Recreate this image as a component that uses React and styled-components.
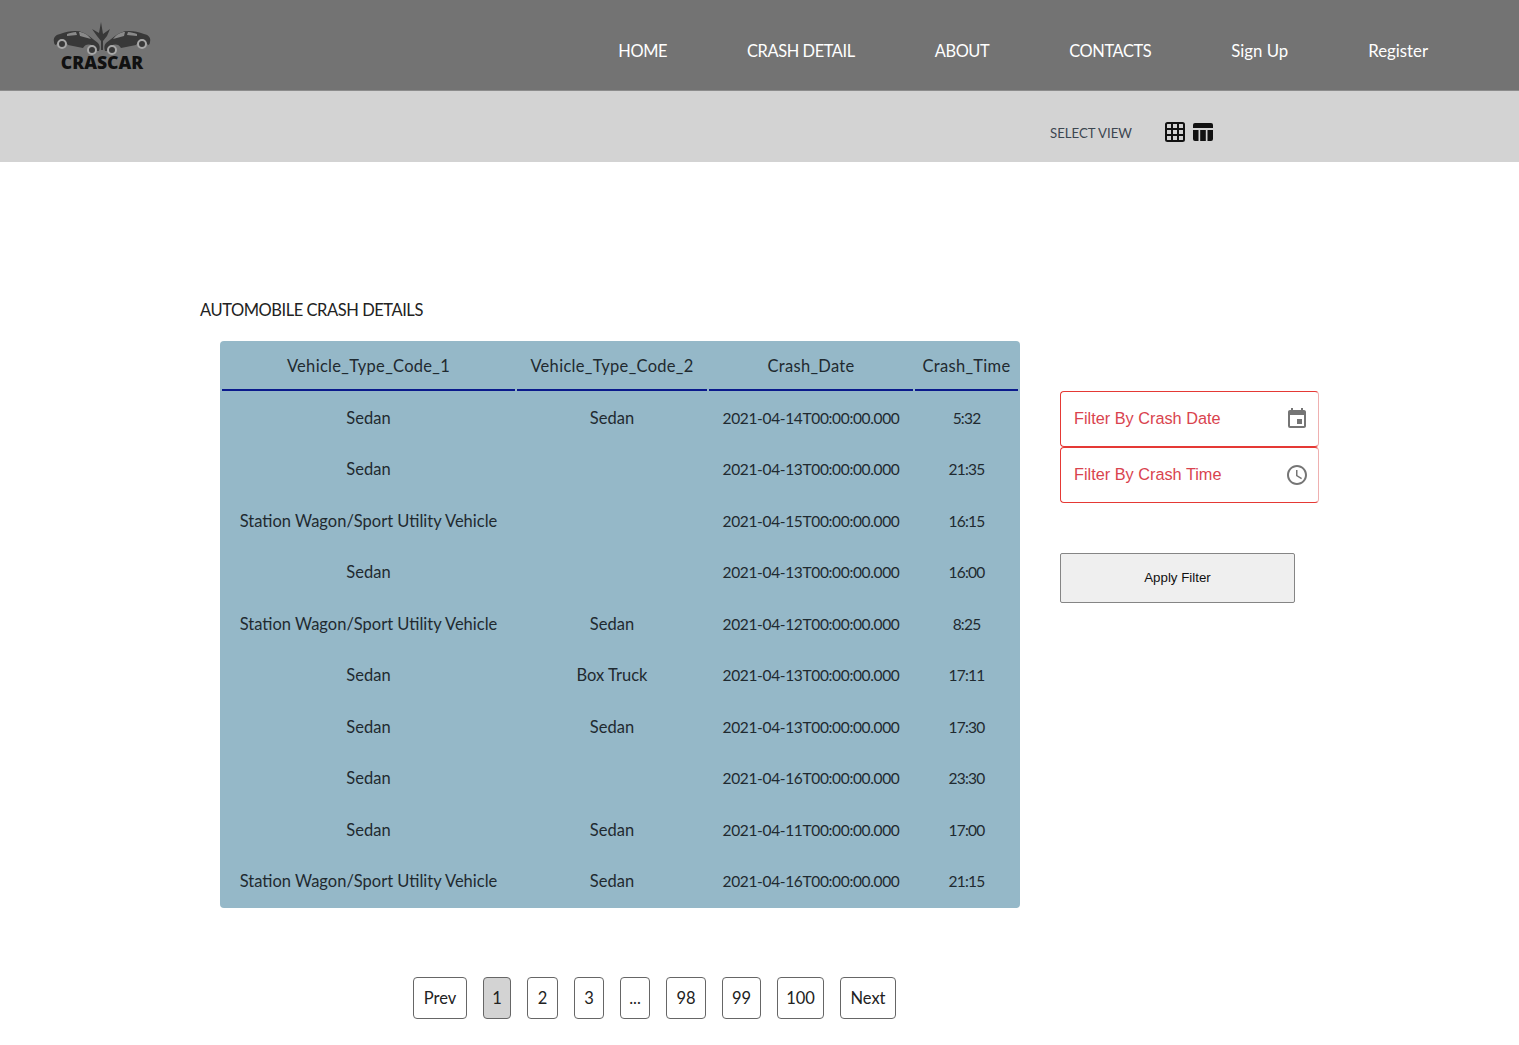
import React from 'react'
import styled, { createGlobalStyle } from 'styled-components'
import { MdEvent, MdAccessTime } from 'react-icons/md'

const GlobalStyle = createGlobalStyle`
  html, body {
    margin: 0;
    padding: 0;
    background: #fff;
    font-family: "Lato", "Open Sans", sans-serif;
    color: #1f2a30;
  }
`

const Header = styled.header`
  height: 90px;
  background: #737373;
  border-bottom: 1px solid #8c8c8c;
  display: flex;
  justify-content: space-between;
  align-items: flex-start;
  padding: 0 91px 0 52px;
`

const Logo = styled.div`
  width: 100px;
  padding-top: 21px;
  display: flex;
  flex-direction: column;
  align-items: center;
  svg {
    display: block;
  }
`

const LogoText = styled.span`
  font-family: "Open Sans", sans-serif;
  font-weight: 800;
  font-size: 17.6px;
  line-height: 17px;
  color: #111;
  margin-top: -3px;
`

const Nav = styled.nav`
  display: flex;
  gap: 80px;
  height: 100%;
  padding-top: 41px;
  box-sizing: border-box;
`

const NavLink = styled.a`
  font-size: ${props => props.caps ? '16.4px' : '16.8px'};
  letter-spacing: ${props => props.caps ? '-0.4px' : 'normal'};
  line-height: 20px;
  color: #fff;
`

const ViewBar = styled.div`
  height: 71px;
  background: #d3d3d3;
  display: flex;
  align-items: center;
  padding: 13px 0 0 1050px;
  box-sizing: border-box;
`

const ViewLabel = styled.span`
  font-size: 13.2px;
  color: #3c4650;
  margin-right: 33px;
`

const ViewIcons = styled.div`
  display: flex;
  gap: 8px;
  align-items: center;
  margin-top: -2px;
`

const Main = styled.main`
  display: flex;
  flex-direction: column;
  padding: 137px 0 0 200px;
`

const Title = styled.h2`
  margin: 0;
  font-size: 16.5px;
  letter-spacing: -0.45px;
  line-height: 22px;
  font-weight: 400;
  color: #222;
`

const Content = styled.div`
  display: flex;
  align-items: flex-start;
  margin: 20px 0 0 20px;
`

const Table = styled.table`
  width: 800px;
  table-layout: fixed;
  background: #95b8c8;
  border-radius: 4px;
  border-spacing: 2px;
  border-collapse: separate;
  font-size: 16.5px;
`

const Th = styled.th`
  height: 46px;
  padding: 0;
  font-weight: 400;
  letter-spacing: 0.3px;
  text-align: center;
  border-bottom: 2px solid #0a1a8c;
`

const Td = styled.td`
  height: 49.5px;
  padding: 0;
  text-align: center;
  font-size: ${props => props.numeric ? '15.5px' : 'inherit'};
  letter-spacing: ${props => props.numeric ? props.numeric : 'normal'};
`

const Side = styled.aside`
  width: 259px;
  margin-left: 40px;
  padding-top: 50px;
  display: flex;
  flex-direction: column;
`

const FilterField = styled.div`
  height: 56px;
  box-sizing: border-box;
  border: 1px solid #e53935;
  border-right-color: #efb0b0;
  border-radius: 4px;
  display: flex;
  align-items: center;
  justify-content: space-between;
  padding: 0 9px 2px 13px;
  font-family: "Liberation Sans", Arial, sans-serif;
  font-size: 16.3px;
  color: #d9434e;
  svg {
    color: #757575;
    margin-top: 2px;
  }
`

const ApplyButton = styled.button`
  width: 235px;
  height: 50px;
  margin-top: 50px;
  border: 1px solid #858585;
  border-radius: 2px;
  background: #efefef;
  font-family: "Liberation Sans", Arial, sans-serif;
  font-size: 13.3px;
  color: #111;
  padding: 0 0 2px 0;
`

const Pager = styled.div`
  display: flex;
  align-items: center;
  margin: 69px 0 0 213px;
  padding-bottom: 26px;
`

const PageButton = styled.button`
  height: 42px;
  width: ${props => props.w}px;
  margin-right: ${props => props.gap}px;
  box-sizing: border-box;
  padding: 0;
  border: 1px solid #666;
  border-radius: 4px;
  background: ${props => props.active ? '#d3d3d3' : '#fff'};
  font-family: "Lato", sans-serif;
  font-size: 16.5px;
  color: #222;
`

const columns = [
  { label: 'Vehicle_Type_Code_1', w: 293 },
  { label: 'Vehicle_Type_Code_2', w: 190 },
  { label: 'Crash_Date', w: 204 },
  { label: 'Crash_Time', w: 103 },
]

const SUV = 'Station Wagon/Sport Utility Vehicle'

const rows = [
  ['Sedan', 'Sedan', '2021-04-14T00:00:00.000', '5:32'],
  ['Sedan', '', '2021-04-13T00:00:00.000', '21:35'],
  [SUV, '', '2021-04-15T00:00:00.000', '16:15'],
  ['Sedan', '', '2021-04-13T00:00:00.000', '16:00'],
  [SUV, 'Sedan', '2021-04-12T00:00:00.000', '8:25'],
  ['Sedan', 'Box Truck', '2021-04-13T00:00:00.000', '17:11'],
  ['Sedan', 'Sedan', '2021-04-13T00:00:00.000', '17:30'],
  ['Sedan', '', '2021-04-16T00:00:00.000', '23:30'],
  ['Sedan', 'Sedan', '2021-04-11T00:00:00.000', '17:00'],
  [SUV, 'Sedan', '2021-04-16T00:00:00.000', '21:15'],
]

const pages = [
  { label: 'Prev', w: 54, gap: 16 },
  { label: '1', w: 28, gap: 16, active: true },
  { label: '2', w: 31, gap: 16 },
  { label: '3', w: 30, gap: 16 },
  { label: '...', w: 30, gap: 16 },
  { label: '98', w: 40, gap: 16 },
  { label: '99', w: 39, gap: 16 },
  { label: '100', w: 47, gap: 16 },
  { label: 'Next', w: 56, gap: 0 },
]

const navItems = [
  { label: 'HOME', caps: true },
  { label: 'CRASH DETAIL', caps: true },
  { label: 'ABOUT', caps: true },
  { label: 'CONTACTS', caps: true },
  { label: 'Sign Up' },
  { label: 'Register' },
]

// hand drawn from the logo: two cars nosing into a burst
function CarsLogo() {
  return (
    <svg width="98" height="36" viewBox="0 0 98 36" fill="#383838">
      <path d="M1 21c-1-4 1-7 6-8 5-2 10-3 15-3 6 0 10 2 14 5l9 7c2 2 2 5 1 8h-3a7 7 0 0 0-13-3L15 24a7 7 0 0 0-12 0c-1 0-2-1-2-3z" />
      <path d="M97 21c1-4-1-7-6-8-5-2-10-3-15-3-6 0-10 2-14 5l-9 7c-2 2-2 5-1 8h3a7 7 0 0 1 13-3l15-3a7 7 0 0 1 12 0c1 0 2-1 2-3z" />
      <path d="M14 13c3-1 6-2 9-2l1 3-10 1zM26 11c4 0 8 2 12 7l-11-3z" fill="#8a8a8a" />
      <path d="M84 13c-3-1-6-2-9-2l-1 3 10 1zM72 11c-4 0-8 2-12 7l11-3z" fill="#8a8a8a" />
      <circle cx="9" cy="23" r="4" stroke="#a8a8a8" strokeWidth="2" />
      <circle cx="39" cy="29" r="4" stroke="#a8a8a8" strokeWidth="2" />
      <circle cx="59" cy="29" r="4" stroke="#a8a8a8" strokeWidth="2" />
      <circle cx="89" cy="23" r="4" stroke="#a8a8a8" strokeWidth="2" />
      <path d="M48 1l2 12 7-5-3 7-4 5v9h-2v-9l-4-5-5-7 7 4z" />
    </svg>
  )
}

function GridIcon() {
  return (
    <svg width="20" height="20" viewBox="0 0 20 20" fill="none" stroke="#111" strokeWidth="2">
      <rect x="1" y="1" width="18" height="18" rx="1.5" />
      <path d="M7 1v18M13 1v18M1 7h18M1 13h18" />
    </svg>
  )
}

function ColumnsIcon() {
  return (
    <svg width="20" height="18" viewBox="0 0 20 18" fill="#111">
      <path d="M2 0h16a2 2 0 0 1 2 2v3H0V2a2 2 0 0 1 2-2z" />
      <path d="M0 7h5.500v11H2a2 2 0 0 1-2-2zM7.200 7h5.600v11H7.200zM14.500 7H20v9a2 2 0 0 1-2 2h-3.500z" />
    </svg>
  )
}

export default function App() {
  return (
    <>
      <GlobalStyle />
      <Header>
        <Logo>
          <CarsLogo />
          <LogoText>CRASCAR</LogoText>
        </Logo>
        <Nav>
          {navItems.map(item => <NavLink key={item.label} caps={item.caps}>{item.label}</NavLink>)}
        </Nav>
      </Header>
      <ViewBar>
        <ViewLabel>SELECT VIEW</ViewLabel>
        <ViewIcons>
          <GridIcon />
          <ColumnsIcon />
        </ViewIcons>
      </ViewBar>
      <Main>
        <Title>AUTOMOBILE CRASH DETAILS</Title>
        <Content>
          <Table>
            <colgroup>
              {columns.map(c => <col key={c.label} width={c.w} />)}
            </colgroup>
            <thead>
              <tr>
                {columns.map(c => <Th key={c.label}>{c.label}</Th>)}
              </tr>
            </thead>
            <tbody>
              {rows.map((row, i) => (
                <tr key={i}>
                  <Td>{row[0]}</Td>
                  <Td>{row[1]}</Td>
                  <Td numeric="-0.35px">{row[2]}</Td>
                  <Td numeric="-0.8px">{row[3]}</Td>
                </tr>
              ))}
            </tbody>
          </Table>
          <Side>
            <FilterField>
              Filter By Crash Date
              <MdEvent size={24} />
            </FilterField>
            <FilterField>
              Filter By Crash Time
              <MdAccessTime size={24} />
            </FilterField>
            <ApplyButton>Apply Filter</ApplyButton>
          </Side>
        </Content>
        <Pager>
          {pages.map(p => (
            <PageButton key={p.label} w={p.w} gap={p.gap} active={p.active}>{p.label}</PageButton>
          ))}
        </Pager>
      </Main>
    </>
  )
}
